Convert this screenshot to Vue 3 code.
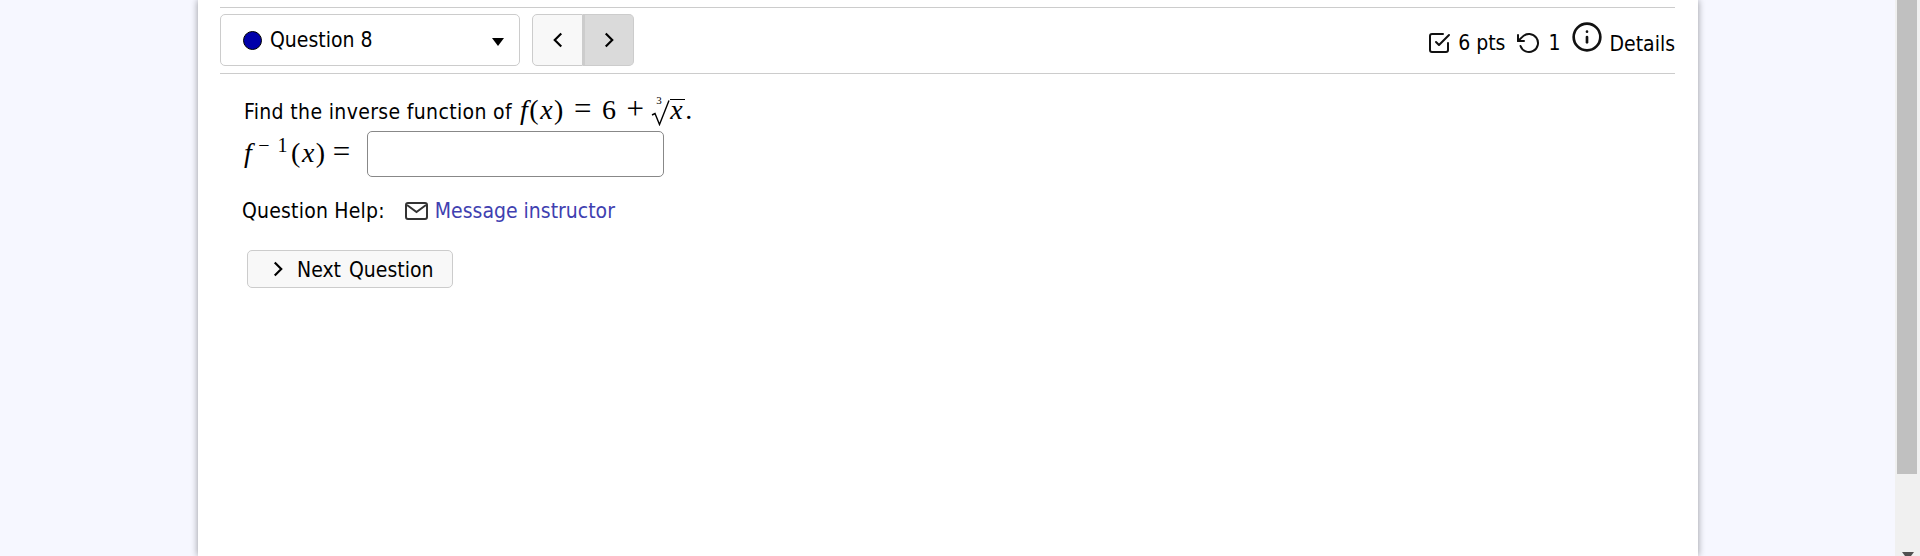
<script setup>
const points = 6
const attempts = 1
</script>

<template>
  <div class="page">
    <main class="main">
      <section class="card">
        <div class="toolbar">
          <div class="select">
            <span class="dot"></span>
            <span class="select-label">Question 8</span>
            <span class="caret"></span>
          </div>
          <div class="nav">
            <button class="nav-btn">
              <svg width="26" height="26" viewBox="0 0 24 24"><path d="M15 18l-6-6 6-6" fill="none" stroke="#000" stroke-width="2" /></svg>
            </button>
            <button class="nav-btn next">
              <svg width="26" height="26" viewBox="0 0 24 24"><path d="M9 18l6-6-6-6" fill="none" stroke="#000" stroke-width="2" /></svg>
            </button>
          </div>
          <div class="meta">
            <svg class="meta-icon" width="24" height="24" viewBox="0 0 24 24" fill="none" stroke="#111" stroke-width="2" stroke-linecap="round" stroke-linejoin="round"><path d="M9 11l3 3L22 4" /><path d="M21 12v7a2 2 0 0 1-2 2H5a2 2 0 0 1-2-2V5a2 2 0 0 1 2-2h11" /></svg>
            <span class="pts">{{ points }} pts</span>
            <svg class="meta-icon retry" width="24" height="24" viewBox="0 0 24 24" fill="none" stroke="#111" stroke-width="2" stroke-linecap="round" stroke-linejoin="round"><path d="M1 4v6h6" /><path d="M3.510 15a9 9 0 1 0 2.130-9.360L1 10" /></svg>
            <span class="tries">{{ attempts }}</span>
            <svg class="info" width="32" height="32" viewBox="0 0 24 24" fill="none" stroke="#111" stroke-width="2" stroke-linecap="round"><circle cx="12" cy="12" r="10" /><path d="M12 16v-4" /><path d="M12 8h.01" /></svg>
            <span class="details">Details</span>
          </div>
        </div>

        <div class="question">
          <div class="prompt">
            <span class="prompt-text">Find the inverse function of</span>
            <span class="math math-first"><i>f</i>(<i>x</i>)<span class="op">=</span>6<span class="op">+</span></span><span class="math root"><sup class="index">3</sup><svg class="radical" width="19" height="26" viewBox="0 0 19 26"><path d="M1 15l3-1.500 4.500 11L18 .5" fill="none" stroke="#000" stroke-width="1.400" /></svg><i class="radicand">x</i></span><span class="math">.</span>
          </div>
          <div class="answer-row">
            <span class="math answer-math"><i>f</i><sup class="inv">− 1</sup>(<i>x</i>)<span class="op answer-op">=</span></span>
            <input class="answer" type="text" />
          </div>
        </div>

        <div class="help">
          <span class="help-label">Question Help:</span>
          <svg class="mail" width="23" height="18" viewBox="0 0 23 18" fill="none" stroke="#333" stroke-width="2"><rect x="1" y="1" width="21" height="16" rx="2" /><path d="m2 3 9.500 7L21 3" /></svg>
          <a class="help-link">Message instructor</a>
        </div>

        <button class="next-question">
          <svg width="26" height="26" viewBox="0 0 24 24"><path d="M9 18l6-6-6-6" fill="none" stroke="#000" stroke-width="2" /></svg>
          <span>Next Question</span>
        </button>
      </section>
    </main>
    <aside class="scrollbar">
      <div class="thumb"></div>
      <div class="arrow"></div>
    </aside>
  </div>
</template>

<style scoped>
.page {
  display: flex;
  height: 556px;
  overflow: hidden;
  background: #f6f7ff;
  color: #000;
  font-family: "DejaVu Sans", sans-serif;
  font-stretch: condensed;
  font-size: 21px;
}

.main {
  flex: 1;
  padding-left: 198px;
  padding-right: 197px;
}

.card {
  box-sizing: border-box;
  height: 556px;
  padding: 7px 23px 0 22px;
  background: #fff;
  box-shadow: 0 0 7px rgba(0, 0, 0, 0.4);
}

.toolbar {
  display: flex;
  align-items: flex-start;
  height: 67px;
  padding: 6px 0;
  box-sizing: border-box;
  border-top: 1px solid #ccc;
  border-bottom: 1px solid #ccc;
}

.select {
  box-sizing: border-box;
  display: flex;
  align-items: center;
  width: 300px;
  height: 52px;
  padding: 0 15px 0 22px;
  border: 1px solid #ccc;
  border-radius: 5px;
}

.dot {
  box-sizing: border-box;
  width: 19px;
  height: 19px;
  margin-right: 8px;
  border: 1px solid #000;
  border-radius: 50%;
  background: #0000aa;
}

.select-label {
  flex: 1;
}

.caret {
  width: 0;
  height: 0;
  border-left: 6px solid transparent;
  border-right: 6px solid transparent;
  border-top: 8px solid #000;
  margin-top: 3px;
}

.nav {
  display: flex;
  margin-left: 12px;
  height: 52px;
}

.nav-btn {
  display: flex;
  align-items: center;
  justify-content: center;
  box-sizing: border-box;
  width: 51px;
  height: 52px;
  padding: 0;
  border: 1px solid #ccc;
  border-radius: 5px 0 0 5px;
  background: #f8f8f8;
}

.nav-btn.next {
  border-left-width: 2px;
  border-radius: 0 5px 5px 0;
  background: #dadada;
}

.meta {
  display: flex;
  align-items: center;
  align-self: center;
  margin-left: auto;
  padding-top: 4px;
}

.meta-icon {
  display: block;
}

.pts {
  margin-left: 7px;
}

.retry {
  margin-left: 12px;
}

.tries {
  margin-left: 7px;
}

.info {
  margin: -11px 6px 0 11px;
}

.details {
  padding-top: 2px;
}

.question {
  padding: 18px 0 0 24px;
}

.prompt {
  height: 36px;
  line-height: 36px;
  white-space: nowrap;
}

.prompt-text {
  letter-spacing: 0.350px;
}

.math {
  font-family: "Liberation Serif", serif;
  font-size: 28px;
  letter-spacing: 1.500px;
}

.math-first {
  margin-left: 8px;
}

.op {
  margin: 0 9px;
  font-size: 31px;
  line-height: 0;
}

.answer-op {
  margin-left: 6px;
}

.root {
  position: relative;
  display: inline-block;
  margin-left: -3px;
  padding-left: 19px;
}

.index {
  position: absolute;
  left: 5px;
  top: 1px;
  font-size: 11px;
  line-height: 14px;
}

.radical {
  position: absolute;
  left: 0;
  top: 8px;
}

.radicand {
  display: inline-block;
  padding-right: 1px;
  border-top: 1px solid #000;
  line-height: 19px;
}

.answer-row {
  display: flex;
  align-items: center;
  height: 46px;
  margin-top: 3px;
}

.answer-math {
  width: 123px;
  margin-top: -2px;
  white-space: nowrap;
}

.inv {
  font-size: 20px;
  line-height: 0;
  margin: 0 2px 0 5px;
}

.answer {
  box-sizing: border-box;
  width: 297px;
  height: 46px;
  border: 1px solid #888;
  border-radius: 5px;
  background: #fff;
}

.help {
  display: flex;
  align-items: center;
  height: 28px;
  margin-top: 20px;
  padding-left: 22px;
}

.help-label {
  letter-spacing: 0.200px;
}

.mail {
  margin-left: 20px;
  margin-right: 7px;
}

.help-link {
  color: #4040b0;
}

.next-question {
  display: flex;
  align-items: center;
  box-sizing: border-box;
  width: 206px;
  height: 38px;
  margin: 25px 0 0 27px;
  padding: 0 0 0 17px;
  border: 1px solid #ccc;
  border-radius: 5px;
  background: #f8f8f8;
  color: #000;
  font: inherit;
}

.next-question span {
  margin-left: 6px;
  padding-top: 2px;
  word-spacing: 2px;
}

.scrollbar {
  position: relative;
  width: 25px;
  background: #f0f0f0;
}

.thumb {
  width: 20px;
  height: 474px;
  margin-left: 2px;
  background: #c0c0c0;
}

.arrow {
  position: absolute;
  left: 7px;
  bottom: -4px;
  border-left: 6px solid transparent;
  border-right: 6px solid transparent;
  border-top: 8px solid #505050;
}
</style>
